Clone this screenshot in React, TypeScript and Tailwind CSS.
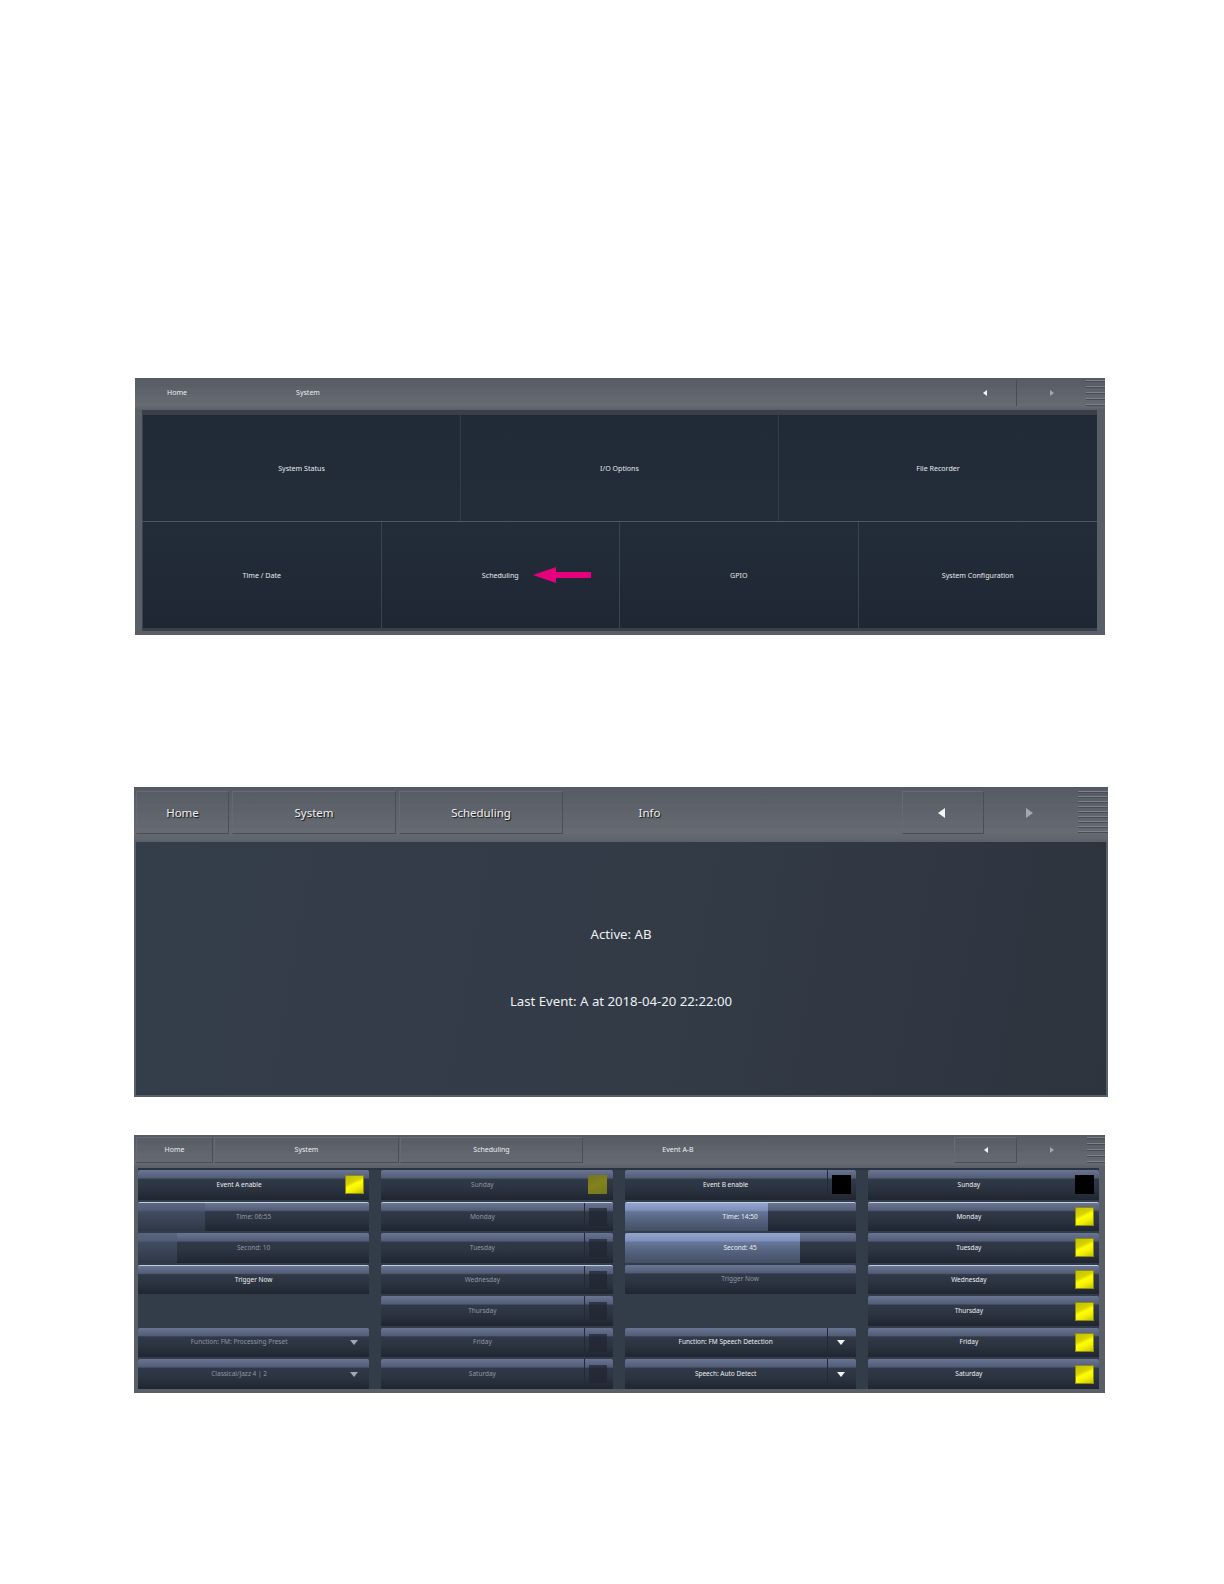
type NavTab = {
  label: string;
  w: string;
  outlined?: boolean;
};

type BtnProps = {
  label?: string;
  dim?: boolean;
  hi?: boolean;
  fill?: number;
  box?: "on" | "dimOn" | "off" | "black";
  arrow?: boolean;
  divider?: boolean;
};

const font = "font-['Noto_Sans',sans-serif]";
const outline = "border border-t-[#666a73] border-l-[#666a73] border-r-[#4a4e57] border-b-[#4a4e57]";
const headerBg =
  "bg-[repeating-linear-gradient(180deg,transparent_0,transparent_3px,rgba(255,255,255,0.012)_3px,rgba(255,255,255,0.012)_4px,transparent_4px,transparent_7px,rgba(0,0,0,0.018)_7px,rgba(0,0,0,0.018)_8px),linear-gradient(180deg,#565a63_0%,#5e626b_40%,#666a73_85%,#5c6069_100%)]";

function Tri({ dir, size, dim }: { dir: "left" | "right" | "down"; size: "sm" | "lg"; dim?: boolean }) {
  const w = size === "lg" ? 7 : 4;
  const h = size === "lg" ? 10 : 6;
  const colour = dim ? "#a3a7ae" : "#f2f3f5";
  if (dir === "down") {
    return (
      <svg width="8" height="5" viewBox="0 0 8 5">
        <path d="M0 0H8L4 5Z" fill={colour} />
      </svg>
    );
  }
  return (
    <svg width={w} height={h} viewBox={`0 0 ${w} ${h}`}>
      <path d={dir === "left" ? `M${w} 0V${h}L0 ${h / 2}Z` : `M0 0V${h}L${w} ${h / 2}Z`} fill={colour} />
    </svg>
  );
}

function Nav({
  tabs,
  text,
  bar,
  gap,
  large,
  leftW,
  rightW,
  gripW,
  leftOutlined,
  rightDivider,
}: {
  tabs: NavTab[];
  text: string;
  bar: string;
  gap: string;
  large?: boolean;
  leftW: string;
  rightW: string;
  gripW: string;
  leftOutlined?: boolean;
  rightDivider?: boolean;
}) {
  return (
    <div className={`flex ${bar} ${headerBg}`}>
      <div className={`flex ${gap}`}>
        {tabs.map((t) => (
          <div
            key={t.label}
            className={`flex items-center justify-center text-[#eef0f2] ${t.w} ${text} ${t.outlined ? outline : ""}`}
          >
            {t.label}
          </div>
        ))}
      </div>
      <div className="ml-auto flex">
        <div className={`flex items-center justify-center ${large ? "pr-[4px]" : ""} ${leftW} ${leftOutlined ? outline : ""} ${rightDivider ? "border-r border-r-[#484c55]" : ""}`}>
          <Tri dir="left" size={large ? "lg" : "sm"} />
        </div>
        <div className={`flex items-center justify-center ${large ? "pr-[4px]" : ""} ${rightW}`}>
          <Tri dir="right" size={large ? "lg" : "sm"} dim />
        </div>
        <div
          className={`${gripW} ${large
            ? "bg-[repeating-linear-gradient(180deg,#7d8189_0,#7d8189_1px,#484c54_1px,#484c54_2px,transparent_2px,transparent_5px)]"
            : "bg-[repeating-linear-gradient(180deg,#7d8189_0,#7d8189_1px,#484c54_1px,#484c54_2px,transparent_2px,transparent_6px)]"}`}
        />
      </div>
    </div>
  );
}

function MenuPanel() {
  const rowOne = ["System Status", "I/O Options", "File Recorder"];
  const rowTwo = ["Time / Date", "Scheduling", "GPIO", "System Configuration"];
  return (
    <div className="ml-[135px] mt-[378px] w-[970px] bg-[#5a5e67]">
      <Nav
        tabs={[
          { label: "Home", w: "w-[82px]" },
          { label: "System", w: "w-[180px]" },
        ]}
        text="text-[7px]"
        bar="h-[32px] pt-[2px] pb-[4px] pl-[1px]"
        gap="gap-0"
        leftW="w-[63px]"
        rightW="w-[69px]"
        gripW="w-[19px]"
        rightDivider
      />
      <div className="pl-[7px] pr-[8px] pb-[4px]">
        <div className="border-t-[5px] border-t-[#3a3f49] border-b-[3px] border-b-[#3a3f49] bg-[linear-gradient(180deg,#212a37,#232c39_50%,#1f2734)] text-[7.1px] text-[#e6e9ec]">
          <div className="grid h-[106px] grid-cols-3 border-l border-l-[#3a4350]">
            {rowOne.map((label, i) => (
              <div key={label} className={`flex items-center justify-center ${i < 2 ? "border-r border-r-[#343c49]" : ""}`}>
                {label}
              </div>
            ))}
          </div>
          <div className="grid h-[107px] grid-cols-4 border-t border-l border-t-[#4d5664] border-l-[#3a4350]">
            {rowTwo.map((label, i) => (
              <div key={label} className={`relative flex items-center justify-center ${i < 3 ? "border-r border-r-[#3a4350]" : ""}`}>
                {label}
                {label === "Scheduling" && (
                  <svg className="absolute left-[151px] top-1/2 -translate-y-1/2" width="58" height="16" viewBox="0 0 58 16">
                    <path d="M0 8L23 0V5H58V11H23V16Z" fill="#e6007e" />
                  </svg>
                )}
              </div>
            ))}
          </div>
        </div>
      </div>
    </div>
  );
}

function InfoPanel() {
  return (
    <div className="ml-[134px] mt-[152px] w-[974px] bg-[#5a5e67]">
      <Nav
        tabs={[
          { label: "Home", w: "w-[93px]", outlined: true },
          { label: "System", w: "w-[164px]", outlined: true },
          { label: "Scheduling", w: "w-[164px]", outlined: true },
          { label: "Info", w: "w-[167px]" },
        ]}
        text="text-[11.5px] [text-shadow:1px_1px_1px_#111]"
        bar="h-[55px] pt-[4px] pb-[8px] pl-[2px]"
        gap="gap-[3px]"
        large
        leftW="w-[82px]"
        rightW="w-[94px]"
        gripW="w-[30px]"
        leftOutlined
      />
      <div className="px-[2px] pb-[2px]">
        <div className="flex h-[253px] flex-col items-center bg-[linear-gradient(100deg,#343e4a,#323a46_60%,#2e343e)] pt-[82px] text-[13.2px] text-[#eef0f2]">
          <div className="h-[20px] leading-[20px]">Active: AB</div>
          <div className="mt-[47px] h-[20px] leading-[20px]">Last Event: A at 2018-04-20 22:22:00</div>
        </div>
      </div>
    </div>
  );
}

function Btn({ label, dim, hi, fill, box, arrow, divider }: BtnProps) {
  if (!label) return <div />;
  const inset = box || arrow;
  return (
    <div
      className={`relative flex items-center overflow-hidden rounded-t-[2px] bg-[linear-gradient(180deg,#6a7594_0%,#535d76_26%,#303947_31%,#2c3442_60%,#1f2631_100%)] ${hi ? "border-t border-t-[#c3cde0]" : ""}`}
    >
      {fill !== undefined && (
        <div
          className={`absolute inset-y-0 left-0 ${dim
            ? "bg-[linear-gradient(180deg,#5a6581_0%,#505b75_26%,#414c60_31%,#3a4456_60%,#2e3746_100%)]"
            : "bg-[linear-gradient(180deg,#94a5d0_0%,#7f90bb_26%,#66769a_31%,#566380_60%,#434f65_100%)]"}`}
          style={{ width: `${fill}%` }}
        />
      )}
      <div
        className={`relative flex min-w-0 flex-1 items-center justify-center text-[6.5px] leading-none ${dim ? "text-[#8f96a2]" : "text-[#eceef1]"}`}
      >
        {label}
      </div>
      {inset && (
        <div className={`relative flex h-full w-[29px] shrink-0 items-center justify-center pr-[1px] ${divider ? "border-l border-l-[#232935]" : ""}`}>
          {arrow && <Tri dir="down" size="sm" dim={dim} />}
          {box === "on" && (
            <div className="h-[19px] w-[19px] border border-[#8e8a18] bg-[linear-gradient(155deg,#c4c000_0%,#d6d200_35%,#ffff00_50%,#f3f000_70%,#c4c000_100%)]" />
          )}
          {box === "dimOn" && (
            <div className="h-[19px] w-[19px] bg-[linear-gradient(155deg,#75741c_0%,#83821e_50%,#75741c_100%)]" />
          )}
          {box === "off" && <div className="h-[18px] w-[18px] bg-[#1f2530]/70" />}
          {box === "black" && <div className="h-[19px] w-[19px] bg-black" />}
        </div>
      )}
    </div>
  );
}

const columns: BtnProps[][] = [
  [
    { label: "Event A enable", box: "on" },
    { label: "Time: 06:55", dim: true, hi: true, fill: 29 },
    { label: "Second: 10", dim: true, fill: 17 },
    { label: "Trigger Now", hi: true },
    {},
    { label: "Function: FM: Processing Preset", dim: true, arrow: true },
    { label: "Classical/Jazz 4 | 2", dim: true, arrow: true },
  ],
  [
    { label: "Sunday", dim: true, box: "dimOn" },
    { label: "Monday", dim: true, hi: true, box: "off", divider: true },
    { label: "Tuesday", dim: true, box: "off", divider: true },
    { label: "Wednesday", dim: true, hi: true, box: "off", divider: true },
    { label: "Thursday", dim: true, box: "off", divider: true },
    { label: "Friday", dim: true, box: "off", divider: true },
    { label: "Saturday", dim: true, box: "off", divider: true },
  ],
  [
    { label: "Event B enable", box: "black", divider: true },
    { label: "Time: 14:50", hi: true, fill: 62 },
    { label: "Second: 45", fill: 76 },
    { label: "Trigger Now", dim: true },
    {},
    { label: "Function: FM Speech Detection", arrow: true, divider: true },
    { label: "Speech: Auto Detect", arrow: true, divider: true },
  ],
  [
    { label: "Sunday", box: "black" },
    { label: "Monday", hi: true, box: "on" },
    { label: "Tuesday", box: "on" },
    { label: "Wednesday", hi: true, box: "on" },
    { label: "Thursday", box: "on" },
    { label: "Friday", box: "on" },
    { label: "Saturday", box: "on" },
  ],
];

function EventPanel() {
  return (
    <div className="ml-[134px] mt-[38px] w-[971px] bg-[#5a5e67]">
      <Nav
        tabs={[
          { label: "Home", w: "w-[77px]", outlined: true },
          { label: "System", w: "w-[185px]", outlined: true },
          { label: "Scheduling", w: "w-[183px]", outlined: true },
          { label: "Event A-B", w: "w-[188px]" },
        ]}
        text="text-[7px]"
        bar="h-[33px] pt-[2px] pb-[5px] pl-[2px]"
        gap="gap-[1px]"
        leftW="w-[63px]"
        rightW="w-[70px]"
        gripW="w-[18px]"
        leftOutlined
      />
      <div className="pl-[4px] pr-[6px] pb-[4px]">
        <div className="grid h-[221px] grid-cols-4 gap-x-[12px] border-t-2 border-t-[#2b3240] bg-[#333c49]">
          {columns.map((col, c) => (
            <div key={c} className="grid grid-rows-7 gap-y-[2px]">
              {col.map((b, r) => (
                <Btn key={r} {...b} />
              ))}
            </div>
          ))}
        </div>
      </div>
    </div>
  );
}

export default function App() {
  return (
    <div className={`h-[1584px] w-[1224px] overflow-hidden bg-white ${font}`}>
      <MenuPanel />
      <InfoPanel />
      <EventPanel />
    </div>
  );
}
